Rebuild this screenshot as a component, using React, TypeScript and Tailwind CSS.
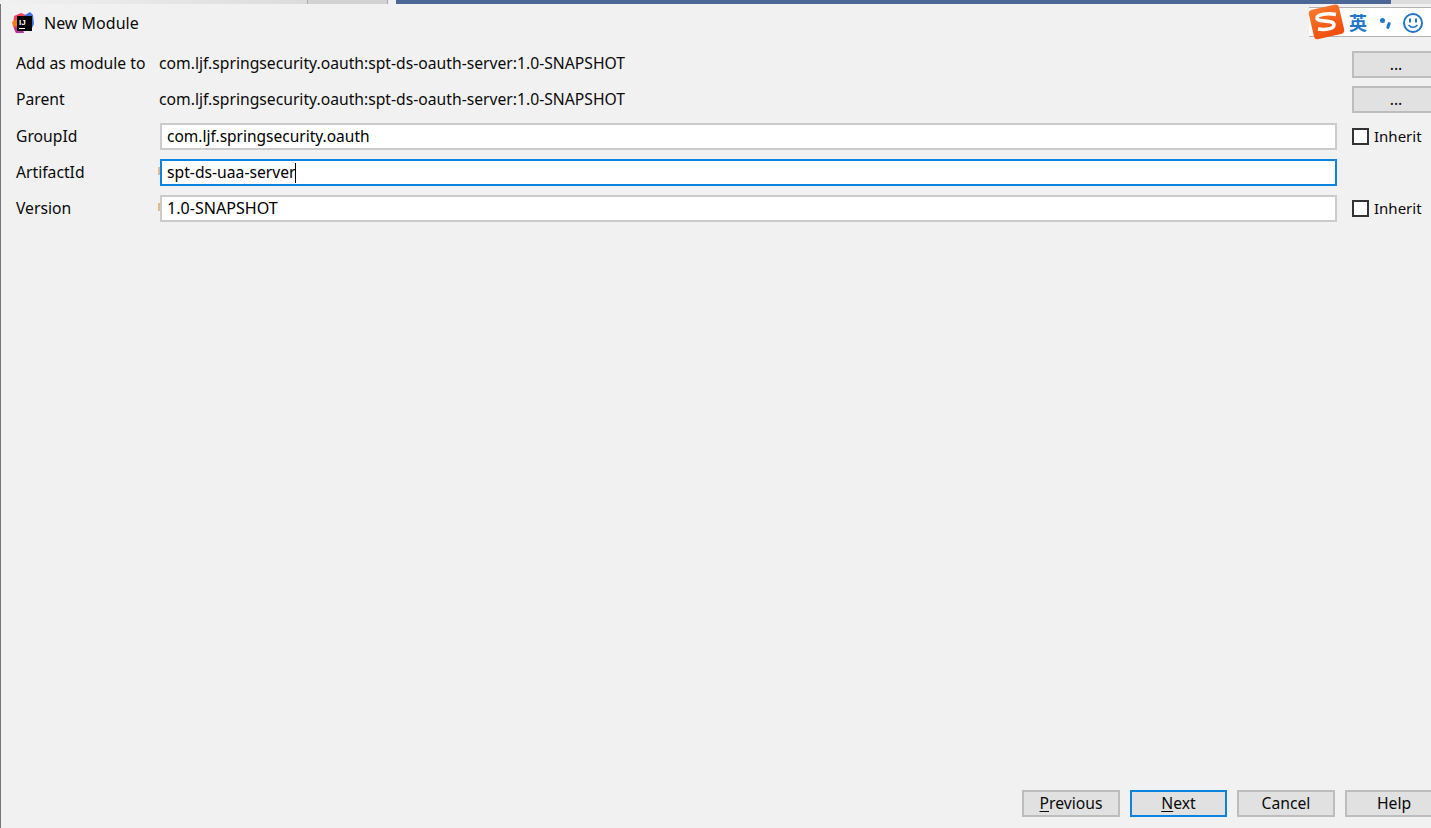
import React from "react";

const font = "font-['Noto_Sans','Liberation_Sans',sans-serif]";

const IdeaLogo = () => (
  <svg width="22" height="22" viewBox="0 0 22 22">
    <polygon points="2,4 9,1 14,3 9,12 4,21 1,14" fill="#f5445c" />
    <polygon points="0,10 5,7 6,14 1,14" fill="#f97a12" />
    <polygon points="13,3 18,0 21,3 22,12 19,18 12,12" fill="#3f6fe8" />
    <polygon points="2,16 10,13 12,21 4,21" fill="#b5329f" />
    <rect x="5" y="4" width="15" height="15" fill="#000" />
    <rect x="7" y="16" width="6" height="1" fill="#fff" />
    <text x="7" y="12.500" fill="#fff" fontSize="8" fontWeight="700" fontFamily="Liberation Sans">IJ</text>
  </svg>
);

const SogouBar = () => (
  <div className="absolute right-0 top-[7px] flex h-[30px] w-[122px] items-center border-y border-[#b3b3b3] bg-white">
    <svg className="absolute left-[-1px] top-[-4px]" width="38" height="36" viewBox="0 0 38 36">
      <defs>
        <linearGradient id="sogou" x1="0" y1="0" x2="0.3" y2="1">
          <stop offset="0" stopColor="#f97a2c" />
          <stop offset="1" stopColor="#f2500f" />
        </linearGradient>
      </defs>
      <rect x="3" y="3" width="31" height="30" rx="4" transform="rotate(-13 18 18)" fill="url(#sogou)" />
      <path d="M28 10.500 C20 9 9 10 9 14 C9 19 26 15 26 21 C26 25 17 26 10 25" fill="none" stroke="#fff" strokeWidth="3.500" />
    </svg>
    <span className="absolute left-[40px] text-[18px] leading-none font-bold text-[#2176c7] font-['Noto_Sans_CJK_SC',sans-serif]">英</span>
    <span className="absolute left-[71px] top-[10px] h-[5px] w-[5px] rounded-full bg-[#2176c7]" />
    <span className="absolute left-[78px] top-[14px] h-[7px] w-[3px] rotate-[20deg] rounded-full bg-[#2176c7]" />
    <svg className="absolute left-[94px] top-[5px]" width="20" height="20" viewBox="0 0 20 20" fill="none" stroke="#2176c7" strokeWidth="2">
      <circle cx="10" cy="10" r="9" />
      <path d="M7 5.500v4M13 5.500v4" />
      <path d="M5.500 12c2.500 3 6.500 3 9 0" strokeWidth="1.500" />
    </svg>
  </div>
);

const Marker = () => <span className="absolute left-[-2px] top-[8px] h-[8px] w-[2px] bg-[#dfb98f]" />;

const Field = ({ value, focused, marker, caret, textSize }: { value: string; focused?: boolean; marker?: boolean; caret?: boolean; textSize?: string }) => (
  <div className="relative flex-1">
    {marker && <Marker />}
    <div className={`flex h-[27px] items-center border-2 bg-white pl-[5px] text-black ${textSize ?? ""} ${focused ? "border-[#0a84e0]" : "border-[#cbcbcb]"}`}>
      {value}
      {caret && <span className="ml-[-1px] h-[20px] w-px bg-black" />}
    </div>
  </div>
);

const Inherit = () => (
  <div className="flex items-center gap-[5px]">
    <span className="h-[17px] w-[17px] border-2 border-[#333] bg-white" />
    <span className="text-[15px]">Inherit</span>
  </div>
);

const Browse = () => (
  <button className="mr-[-9px] h-[27px] w-[88px] shrink-0 border-2 border-[#bdbdbd] bg-[#e1e1e1] text-center leading-[21px]">...</button>
);

const FooterButton = ({ label, mnemonic, primary, width }: { label: string; mnemonic?: boolean; primary?: boolean; width: string }) => (
  <button className={`h-[27px] shrink-0 border-2 bg-[#e1e1e1] text-center ${width} ${primary ? "border-[#0a84e0]" : "border-[#bdbdbd]"}`}>
    {mnemonic ? (
      <>
        <span className="underline underline-offset-2">{label[0]}</span>
        {label.slice(1)}
      </>
    ) : (
      label
    )}
  </button>
);

const labelCol = "w-[159px] shrink-0 pl-[15px]";

export default function App() {
  return (
    <div className={`relative flex h-[828px] w-[1431px] flex-col overflow-hidden bg-[#f1f1f1] text-[15.7px] text-[#0a0a0a] ${font}`}>
      <div className="flex h-[4px] shrink-0">
        <div className="h-full w-[307px] bg-gradient-to-r from-[#f1f1f1] to-[#dcdcdc]" />
        <div className="h-full w-[81px] border-x border-[#a9a9a9] bg-[#d2d2d2]" />
        <div className="ml-[8px] h-full w-[995px] bg-[#4a6796]" />
        <div className="ml-auto h-full w-[40px] bg-[#dcdcdc]" />
      </div>
      <div className="flex min-h-0 flex-1 flex-col border-l border-[#777]">
        <div className="flex h-[37px] shrink-0 items-center gap-[10px] pl-[11px]">
          <IdeaLogo />
          <span className="text-[16px]">New Module</span>
        </div>

        <div className="flex flex-col">
          <div className="mt-[9px] flex h-[27px] items-center pt-px">
            <div className={labelCol}>Add as module to</div>
            <div className="-ml-px flex-1">com.ljf.springsecurity.oauth:spt-ds-oauth-server:1.0-SNAPSHOT</div>
            <Browse />
          </div>
          <div className="mt-[9px] flex h-[27px] items-center">
            <div className={labelCol}>Parent</div>
            <div className="-ml-px flex-1">com.ljf.springsecurity.oauth:spt-ds-oauth-server:1.0-SNAPSHOT</div>
            <Browse />
          </div>
          <div className="mt-[10px] flex h-[27px] items-center">
            <div className={labelCol}>GroupId</div>
            <Field value="com.ljf.springsecurity.oauth" textSize="text-[15.5px]" />
            <div className="w-[94px] shrink-0 pl-[15px]"><Inherit /></div>
          </div>
          <div className="mt-[9px] flex h-[27px] items-center">
            <div className={labelCol}>ArtifactId</div>
            <Field value="spt-ds-uaa-server" focused marker caret />
            <div className="w-[94px] shrink-0" />
          </div>
          <div className="mt-[9px] flex h-[27px] items-center">
            <div className={labelCol}>Version</div>
            <Field value="1.0-SNAPSHOT" marker textSize="text-[16.1px]" />
            <div className="w-[94px] shrink-0 pl-[15px]"><Inherit /></div>
          </div>
        </div>

        <div className="mt-auto mr-[-12px] flex justify-end gap-[10px] pb-[11px]">
          <FooterButton label="Previous" mnemonic width="w-[98px]" />
          <FooterButton label="Next" mnemonic primary width="w-[97px]" />
          <FooterButton label="Cancel" width="w-[98px]" />
          <FooterButton label="Help" width="w-[98px]" />
        </div>
      </div>
      <SogouBar />
    </div>
  );
}
